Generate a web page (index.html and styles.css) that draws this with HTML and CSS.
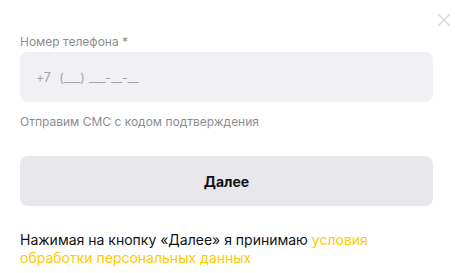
FILE: index.html
```html
<!DOCTYPE html>
<html lang="ru">
<head>
<meta charset="utf-8">
<link rel="stylesheet" href="styles.css">
</head>
<body>
<div class="modal">
  <button class="close" aria-label="Закрыть">
    <svg width="14" height="14" viewBox="0 0 14 14"><path d="M1 1L13 13M13 1L1 13" stroke="#d6d6da" stroke-width="1.3" fill="none"/></svg>
  </button>
  <div class="label">Номер телефона *</div>
  <div class="input"><span class="placeholder">+7&nbsp; (___) ___-__-__</span></div>
  <div class="hint">Отправим СМС с кодом подтверждения</div>
  <button class="next">Далее</button>
  <p class="terms">Нажимая на кнопку «Далее» я принимаю <a class="link" href="#">условия обработки персональных данных</a></p>
</div>
</body>
</html>
```
FILE: styles.css
```css
* { box-sizing: border-box; }
html, body { margin: 0; padding: 0; background: #fff; }
body { font-family: Inter, "Noto Sans", sans-serif; color: #111; }
.modal { position: relative; width: 455px; height: 273px; padding: 34px 22px 0 20px; display: flex; flex-direction: column; }
.close { position: absolute; top: 12px; left: 436px; width: 16px; height: 16px; padding: 1px; border: 0; background: none; display: flex; }
.label { font-size: 12px; line-height: 16px; color: #8c8c94; margin-bottom: 2px; }
.input { height: 50px; background: #f1f1f5; border-radius: 8px; display: flex; align-items: center; padding-left: 16px; }
.placeholder { font-size: 12.5px; color: #a4a4ab; letter-spacing: -0.2px; word-spacing: 1px; }
.hint { margin-top: 12px; font-size: 12px; line-height: 16px; color: #8c8c94; }
.next { margin-top: 26px; height: 50px; border: 0; border-radius: 8px; background: #e7e7ec; font-family: inherit; font-size: 14px; font-weight: 700; color: #111; }
.terms { margin: 25px 0 0; font-size: 14px; line-height: 18px; color: #111; }
.link { color: #fccb00; text-decoration: none; }
```
